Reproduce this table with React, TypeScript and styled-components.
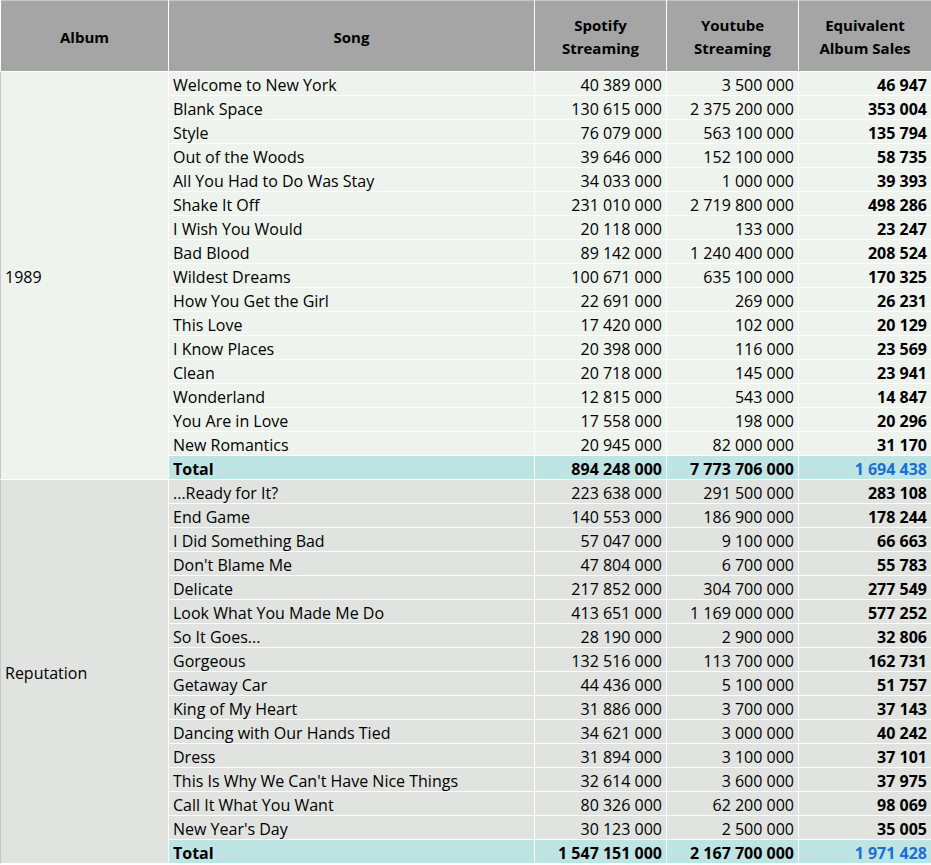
import React from "react";
import styled, { createGlobalStyle } from "styled-components";

type Song = [string, string, string, string];

interface Album {
	name: string;
	tone: "light" | "dark";
	songs: Song[];
	total: [string, string, string];
}

const albums: Album[] = [
	{
		name: "1989",
		tone: "light",
		songs: [
			["Welcome to New York", "40 389 000", "3 500 000", "46 947"],
			["Blank Space", "130 615 000", "2 375 200 000", "353 004"],
			["Style", "76 079 000", "563 100 000", "135 794"],
			["Out of the Woods", "39 646 000", "152 100 000", "58 735"],
			["All You Had to Do Was Stay", "34 033 000", "1 000 000", "39 393"],
			["Shake It Off", "231 010 000", "2 719 800 000", "498 286"],
			["I Wish You Would", "20 118 000", "133 000", "23 247"],
			["Bad Blood", "89 142 000", "1 240 400 000", "208 524"],
			["Wildest Dreams", "100 671 000", "635 100 000", "170 325"],
			["How You Get the Girl", "22 691 000", "269 000", "26 231"],
			["This Love", "17 420 000", "102 000", "20 129"],
			["I Know Places", "20 398 000", "116 000", "23 569"],
			["Clean", "20 718 000", "145 000", "23 941"],
			["Wonderland", "12 815 000", "543 000", "14 847"],
			["You Are in Love", "17 558 000", "198 000", "20 296"],
			["New Romantics", "20 945 000", "82 000 000", "31 170"],
		],
		total: ["894 248 000", "7 773 706 000", "1 694 438"],
	},
	{
		name: "Reputation",
		tone: "dark",
		songs: [
			["...Ready for It?", "223 638 000", "291 500 000", "283 108"],
			["End Game", "140 553 000", "186 900 000", "178 244"],
			["I Did Something Bad", "57 047 000", "9 100 000", "66 663"],
			["Don't Blame Me", "47 804 000", "6 700 000", "55 783"],
			["Delicate", "217 852 000", "304 700 000", "277 549"],
			["Look What You Made Me Do", "413 651 000", "1 169 000 000", "577 252"],
			["So It Goes...", "28 190 000", "2 900 000", "32 806"],
			["Gorgeous", "132 516 000", "113 700 000", "162 731"],
			["Getaway Car", "44 436 000", "5 100 000", "51 757"],
			["King of My Heart", "31 886 000", "3 700 000", "37 143"],
			["Dancing with Our Hands Tied", "34 621 000", "3 000 000", "40 242"],
			["Dress", "31 894 000", "3 100 000", "37 101"],
			["This Is Why We Can't Have Nice Things", "32 614 000", "3 600 000", "37 975"],
			["Call It What You Want", "80 326 000", "62 200 000", "98 069"],
			["New Year's Day", "30 123 000", "2 500 000", "35 005"],
		],
		total: ["1 547 151 000", "2 167 700 000", "1 971 428"],
	},
];

const toneColor = {
	light: "#eff3ee",
	dark: "#e0e3df",
};

const GlobalStyle = createGlobalStyle`
	body {
		margin: 0;
		background: #ffffff;
		font-family: "Open Sans", "Liberation Sans", sans-serif;
	}
`;

const Table = styled.table`
	width: 931px;
	table-layout: fixed;
	border-collapse: collapse;
	border-top: 1px solid #c6c6c6;
	border-left: 1px solid #c6c6c6;
	font-size: 16px;
	color: #000000;
`;

const HeadCell = styled.th`
	height: 68px;
	padding: 2px 4px 0;
	background: #a5a5a5;
	border: 1px solid #ffffff;
	border-top: none;
	font-size: 15px;
	font-weight: 700;
	line-height: 23px;
	text-align: center;
	vertical-align: middle;
`;

const AlbumCell = styled.td<{ $tone: "light" | "dark" }>`
	padding: 3px 4px 0;
	background: ${(p) => toneColor[p.$tone]};
	border: 1px solid #ffffff;
	border-left: none;
	vertical-align: middle;
`;

const Cell = styled.td<{ $tone: "light" | "dark" | "total"; $num?: boolean; $bold?: boolean; $blue?: boolean }>`
	height: 23px;
	padding: 3px 4px 0;
	background: ${(p) => (p.$tone === "total" ? "#bfe4e4" : toneColor[p.$tone])};
	border: 1px solid #ffffff;
	text-align: ${(p) => (p.$num ? "right" : "left")};
	font-weight: ${(p) => (p.$bold ? 700 : 400)};
	color: ${(p) => (p.$blue ? "#1b6fd1" : "#000000")};
	white-space: nowrap;
	overflow: hidden;
	line-height: 20px;
	box-sizing: border-box;
`;

export default function App() {
	return (
		<>
			<GlobalStyle />
			<Table>
				<colgroup>
					<col style={{ width: 168 }} />
					<col style={{ width: 366 }} />
					<col style={{ width: 132 }} />
					<col style={{ width: 132 }} />
					<col style={{ width: 133 }} />
				</colgroup>
				<thead>
					<tr>
						<HeadCell>Album</HeadCell>
						<HeadCell>Song</HeadCell>
						<HeadCell>
							Spotify
							<br />
							Streaming
						</HeadCell>
						<HeadCell>
							Youtube
							<br />
							Streaming
						</HeadCell>
						<HeadCell>
							Equivalent
							<br />
							Album Sales
						</HeadCell>
					</tr>
				</thead>
				<tbody>
					{albums.map((album) => (
						<React.Fragment key={album.name}>
							{album.songs.map((song, i) => (
								<tr key={song[0]}>
									{i === 0 && (
										<AlbumCell $tone={album.tone} rowSpan={album.songs.length + 1}>
											{album.name}
										</AlbumCell>
									)}
									<Cell $tone={album.tone}>{song[0]}</Cell>
									<Cell $tone={album.tone} $num>
										{song[1]}
									</Cell>
									<Cell $tone={album.tone} $num>
										{song[2]}
									</Cell>
									<Cell $tone={album.tone} $num $bold>
										{song[3]}
									</Cell>
								</tr>
							))}
							<tr>
								<Cell $tone="total" $bold>
									Total
								</Cell>
								<Cell $tone="total" $num $bold>
									{album.total[0]}
								</Cell>
								<Cell $tone="total" $num $bold>
									{album.total[1]}
								</Cell>
								<Cell $tone="total" $num $bold $blue>
									{album.total[2]}
								</Cell>
							</tr>
						</React.Fragment>
					))}
				</tbody>
			</Table>
		</>
	);
}
